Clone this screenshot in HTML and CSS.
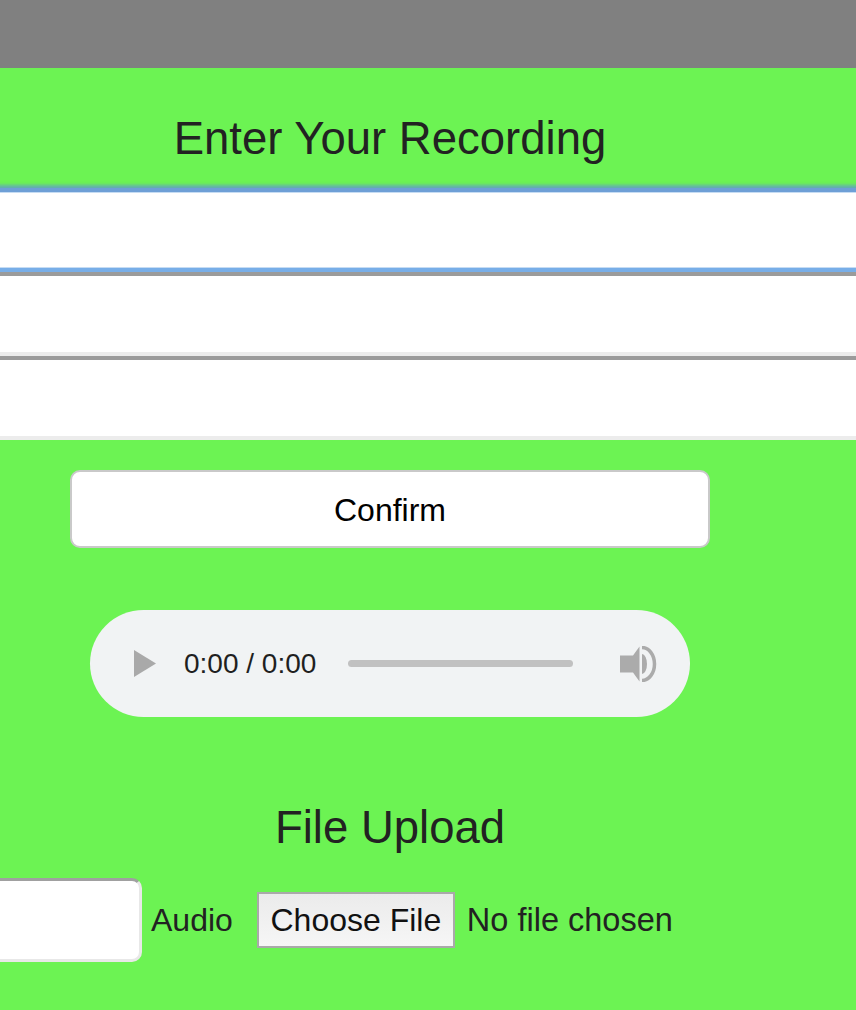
FILE: index.html
```html
<!DOCTYPE html>
<html lang="en">
<head>
<meta charset="utf-8">
<title>Enter Your Recording</title>
<link rel="stylesheet" href="styles.css">
</head>
<body>
<div class="topbar"></div>
<main class="main">
  <div class="content">
    <h1 class="title">Enter Your Recording</h1>
  </div>
  <input class="field field-focus" type="text">
  <input class="field" type="text">
  <input class="field" type="text">
  <div class="content">
    <button class="confirm" type="button">Confirm</button>
    <div class="player">
      <svg class="play" width="22" height="27" viewBox="0 0 22 27"><path d="M0 0 L22 13.5 L0 27 Z" fill="#a9a9a9"/></svg>
      <span class="time">0:00 / 0:00</span>
      <div class="track"></div>
      <svg class="volume" width="38" height="36" viewBox="0 0 38 36">
        <path d="M0 9.5 H13 L19.5 0.5 V35.5 L13 26.5 H0 Z" fill="#ababab"/>
        <path d="M22 8 A5 10 0 0 1 22 28 Z" fill="#ababab"/>
        <path d="M22 1.5 A12.5 16.5 0 0 1 22 34.5" fill="none" stroke="#ababab" stroke-width="3.5"/>
      </svg>
    </div>
    <h2 class="subtitle">File Upload</h2>
  </div>
  <div class="upload-row">
    <div class="name-box"></div>
    <span class="label">Audio</span>
    <span class="choose">Choose File</span>
    <span class="nofile">No file chosen</span>
  </div>
</main>
</body>
</html>
```

FILE: styles.css
```css
html, body {
  margin: 0;
  padding: 0;
}
body {
  font-family: "Liberation Sans", Arial, sans-serif;
  color: #222;
  background: #6cf353;
}
.topbar {
  height: 68px;
  background: #808080;
}
.main {
  background: #6cf353;
  min-height: 942px;
  padding-top: 45px;
  box-sizing: border-box;
  overflow: hidden;
}
.content {
  width: 780px;
  display: flex;
  flex-direction: column;
  align-items: center;
}
.title {
  margin: 0 0 23px;
  font-size: 45.5px;
  line-height: 52px;
  font-weight: 400;
  color: #222;
}
.field {
  display: block;
  box-sizing: border-box;
  width: 900px;
  height: 84px;
  margin: 0 0 0 -20px;
  padding: 0;
  background: #fff;
  border-style: solid;
  border-width: 4px;
  border-color: #9b9b9b #ececec #ececec #9b9b9b;
  outline: none;
}
.field-focus {
  border-color: #6e9fd6 #6e9fd6 #78aee8 #6e9fd6;
  box-shadow: 0 -1px 3px 2px rgba(96, 150, 210, 0.75), inset 0 0 0 1px #c6dcf3;
}
.confirm {
  box-sizing: border-box;
  width: 640px;
  height: 78px;
  margin-top: 30px;
  background: #fff;
  border: 2px solid #c9c9c9;
  border-radius: 10px;
  font-family: "Liberation Sans", Arial, sans-serif;
  font-size: 32px;
  color: #000;
  padding: 3px 0 0;
}
.player {
  box-sizing: border-box;
  width: 600px;
  height: 107px;
  margin-top: 62px;
  background: #f1f3f4;
  border-radius: 54px;
  display: flex;
  align-items: center;
  padding-left: 44px;
}
.play {
  display: block;
  flex: none;
}
.time {
  margin-left: 28px;
  font-size: 28px;
  color: #1f1f1f;
  line-height: 32px;
}
.track {
  margin-left: 32px;
  width: 225px;
  height: 7px;
  border-radius: 4px;
  background: #c1c1c1;
  flex: none;
}
.volume {
  display: block;
  margin-left: 47px;
  flex: none;
}
.subtitle {
  margin: 85px 0 0;
  font-size: 45.5px;
  line-height: 52px;
  font-weight: 400;
  color: #222;
}
.upload-row {
  margin-top: 24px;
  margin-left: -40px;
  display: flex;
  align-items: center;
  font-size: 32px;
  color: #222;
}
.name-box {
  box-sizing: border-box;
  width: 182px;
  height: 84px;
  background: #fff;
  border-style: solid;
  border-width: 3px;
  border-color: #a0a0a0 #e8e8e8 #e8e8e8 #a0a0a0;
  border-radius: 10px;
  flex: none;
}
.label {
  margin-left: 9px;
}
.choose {
  box-sizing: border-box;
  width: 198px;
  height: 56px;
  margin-left: 24px;
  border: 2px solid #a9a9a9;
  background: linear-gradient(#ebebeb, #f6f6f6);
  color: #111;
  display: flex;
  align-items: center;
  justify-content: center;
}
.nofile {
  margin-left: 12px;
  font-size: 32.5px;
}
```
